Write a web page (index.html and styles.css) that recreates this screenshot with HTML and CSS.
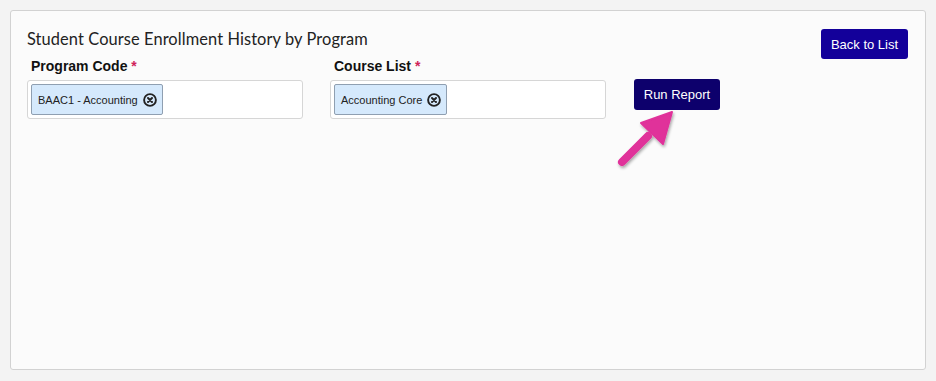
FILE: index.html
```html
<!DOCTYPE html>
<html lang="en">
<head>
    <meta charset="utf-8" />
    <title>Student Course Enrollment History by Program</title>
    <link rel="stylesheet" href="styles.css">
</head>
<body>
    <div class="report-panel">
        <div class="panel-header">
            <h2>Student Course Enrollment History by Program</h2>
            <button class="btn btn-back">Back to List</button>
        </div>

        <div class="filters">
            <div class="field">
                <label>Program Code <span class="req">*</span></label>
                <div class="tag-input">
                    <span class="tag">BAAC1 - Accounting
                        <svg class="tag-x" viewBox="0 0 14 14" width="14" height="14"><circle cx="7" cy="7" r="5.9" fill="none" stroke="#222" stroke-width="1.9"/><path d="M5 5l4 4M9 5l-4 4" stroke="#222" stroke-width="2" stroke-linecap="round"/></svg>
                    </span>
                </div>
            </div>
            <div class="field">
                <label>Course List <span class="req">*</span></label>
                <div class="tag-input">
                    <span class="tag">Accounting Core
                        <svg class="tag-x" viewBox="0 0 14 14" width="14" height="14"><circle cx="7" cy="7" r="5.9" fill="none" stroke="#222" stroke-width="1.9"/><path d="M5 5l4 4M9 5l-4 4" stroke="#222" stroke-width="2" stroke-linecap="round"/></svg>
                    </span>
                </div>
            </div>
            <div class="run-wrap">
                <button class="btn btn-run">Run Report</button>
                <svg class="pointer" viewBox="0 0 70 70" width="70" height="70">
                    <defs>
                        <filter id="sh" x="-30%" y="-30%" width="160%" height="160%">
                            <feDropShadow dx="1" dy="2" stdDeviation="1.5" flood-color="#000" flood-opacity="0.35"/>
                        </filter>
                    </defs>
                    <g filter="url(#sh)">
                        <line x1="10" y1="58" x2="36" y2="32" stroke="#e0309a" stroke-width="8" stroke-linecap="round"/>
                        <polygon points="60,8 29,19 51,40" fill="#e0309a" stroke="#e0309a" stroke-width="2" stroke-linejoin="round"/>
                    </g>
                </svg>
            </div>
        </div>
    </div>
</body>
</html>
```

FILE: styles.css
```css
* {
    margin: 0;
    padding: 0;
    box-sizing: border-box;
}

body {
    font-family: "Liberation Sans", Arial, sans-serif;
    background: #f3f3f3;
    color: #222;
    padding: 10px;
}

.report-panel {
    width: 916px;
    height: 360px;
    background: #fbfbfb;
    border: 1px solid #d2d2d2;
    border-radius: 3px;
    padding: 17px 17px 0 16px;
}

.panel-header {
    display: flex;
    justify-content: space-between;
    align-items: flex-start;
}

.panel-header h2 {
    font-family: "Lato", "Liberation Sans", sans-serif;
    font-weight: 400;
    font-size: 16.4px;
    color: #222;
    margin-top: 1px;
    letter-spacing: 0.1px;
}

.btn {
    font-family: "Liberation Sans", Arial, sans-serif;
    font-size: 13px;
    color: #fff;
    border: none;
    border-radius: 3px;
    cursor: pointer;
}

.btn-back {
    background: #13009a;
    width: 87px;
    height: 30px;
    margin-top: 1px;
}

.filters {
    display: flex;
    align-items: flex-start;
    margin-top: -1px;
}

.field {
    width: 276px;
    margin-right: 27px;
}

.field label {
    display: block;
    font-weight: 700;
    font-size: 14px;
    color: #111;
    padding-left: 4px;
    margin-bottom: 5px;
    height: 17px;
}

.req {
    color: #d0245a;
}

.tag-input {
    height: 39px;
    background: #fff;
    border: 1px solid #d6d6d6;
    border-radius: 3px;
    padding: 3px;
    display: flex;
    align-items: flex-start;
}

.tag {
    display: inline-flex;
    align-items: center;
    gap: 5px;
    height: 31px;
    padding: 0 5px 0 6px;
    font-size: 11px;
    color: #222;
    background: #d5e9fc;
    border: 1px solid #8f9fb1;
    border-radius: 2px;
}

.tag-x {
    display: block;
}

.run-wrap {
    position: relative;
    margin-top: 21px;
    margin-left: 1px;
}

.btn-run {
    background: #0d006c;
    width: 86px;
    height: 31px;
}

.pointer {
    position: absolute;
    left: -22px;
    top: 25px;
}
```
